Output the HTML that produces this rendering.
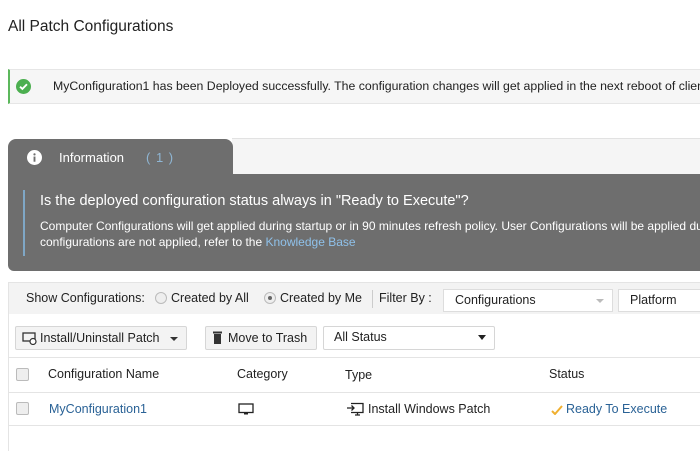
<!DOCTYPE html>
<html><head><style>
*{box-sizing:border-box;margin:0;padding:0}
html,body{width:700px;height:451px;overflow:hidden}
body{background:#fff;font-family:"Liberation Sans",sans-serif;color:#222;font-size:12.5px}
#w{position:relative;width:700px;height:451px;overflow:hidden}
.a{position:absolute;white-space:nowrap}
</style></head><body><div id="w">
<div class="a" style="left:8px;top:18px;font-size:15.5px;color:#222">All Patch Configurations</div>

<div class="a" style="left:8px;top:69px;width:692px;height:35px;background:#f6f6f6;border-top:1px solid #e6e6e6;border-bottom:1px solid #e6e6e6;border-left:2px solid #5cb85c"></div>
<svg class="a" style="left:16px;top:79px" width="15" height="15" viewBox="0 0 16 16"><circle cx="8" cy="8" r="8" fill="#4caf50"/><path d="M4.3 8.2l2.5 2.4 4.9-5" stroke="#fff" stroke-width="2" fill="none"/></svg>
<div class="a" style="left:53px;top:79px;width:647px;overflow:hidden;font-size:12.3px;color:#222">MyConfiguration1 has been Deployed successfully. The configuration changes will get applied in the next reboot of client computers</div>

<div class="a" style="left:232px;top:138px;width:468px;height:37px;background:#f5f5f5;border-top:1px solid #e2e2e2"></div>
<div class="a" style="left:8px;top:139px;width:225px;height:40px;background:#6e6e6e;border-radius:8px 8px 0 0"></div>
<div class="a" style="left:8px;top:174px;width:692px;height:97px;background:#6e6e6e;border-radius:0 0 0 6px"></div>
<svg class="a" style="left:27px;top:150px" width="15" height="15" viewBox="0 0 16 16"><circle cx="8" cy="8" r="8" fill="#fff"/><rect x="7" y="7" width="2" height="5.5" fill="#6e6e6e"/><circle cx="8" cy="4.7" r="1.2" fill="#6e6e6e"/></svg>
<div class="a" style="left:59px;top:150px;font-size:13px;color:#fff">Information</div>
<div class="a" style="left:146px;top:150px;font-size:13px;color:#8fb6d4;letter-spacing:1px">( 1 )</div>
<div class="a" style="left:23px;top:190px;width:2px;height:66px;background:#7fa7c6"></div>
<div class="a" style="left:40px;top:193px;font-size:14.5px;color:#fff">Is the deployed configuration status always in "Ready to Execute"?</div>
<div class="a" style="left:40px;top:219px;width:660px;overflow:hidden;font-size:12px;color:#fff">Computer Configurations will get applied during startup or in 90 minutes refresh policy. User Configurations will be applied during user logon. If the</div>
<div class="a" style="left:40px;top:235px;font-size:12px;color:#fff">configurations are not applied, refer to the <span style="color:#8fc1ea">Knowledge Base</span></div>

<div class="a" style="left:8px;top:282px;width:692px;height:169px;border-left:1px solid #e4e4e4;border-top:1px solid #e4e4e4"></div>
<div class="a" style="left:9px;top:283px;width:691px;height:31px;background:#f3f3f3"></div>
<div class="a" style="left:26px;top:291px;font-size:12.5px">Show Configurations:</div>
<div class="a" style="left:155px;top:292px;width:12px;height:12px;border-radius:50%;border:1px solid #bbb;background:#eee"></div>
<div class="a" style="left:171px;top:291px">Created by All</div>
<div class="a" style="left:264px;top:292px;width:12px;height:12px;border-radius:50%;border:1px solid #bbb;background:#eee"></div>
<div class="a" style="left:268px;top:296px;width:4px;height:4px;border-radius:50%;background:#666"></div>
<div class="a" style="left:280px;top:291px">Created by Me</div>
<div class="a" style="left:372px;top:290px;width:1px;height:18px;background:#ccc"></div>
<div class="a" style="left:379px;top:291px">Filter By :</div>
<div class="a" style="left:443px;top:289px;width:170px;height:23px;background:#fff;border:1px solid #ddd"></div>
<div class="a" style="left:455px;top:293px">Configurations</div>
<div class="a" style="left:596px;top:299px;border-left:4px solid transparent;border-right:4px solid transparent;border-top:4px solid #bbb"></div>
<div class="a" style="left:618px;top:289px;width:82px;height:23px;background:#fff;border:1px solid #ddd;border-right:none"></div>
<div class="a" style="left:630px;top:293px">Platform</div>

<div class="a" style="left:15px;top:326px;width:172px;height:24px;background:#f3f3f3;border:1px solid #d6d6d6;border-radius:2px"></div>
<svg class="a" style="left:22px;top:332px" width="15" height="13" viewBox="0 0 15 13"><rect x="1" y="1" width="12" height="8" fill="none" stroke="#333" stroke-width="1.3"/><circle cx="11" cy="9.5" r="3" fill="#fff" stroke="#333" stroke-width="1.2"/></svg>
<div class="a" style="left:40px;top:331px">Install/Uninstall Patch</div>
<div class="a" style="left:170px;top:337px;border-left:4px solid transparent;border-right:4px solid transparent;border-top:4px solid #333"></div>
<div class="a" style="left:205px;top:326px;width:112px;height:24px;background:#f3f3f3;border:1px solid #d6d6d6;border-radius:2px"></div>
<svg class="a" style="left:213px;top:331px" width="9" height="13" viewBox="0 0 9 13"><rect x="0" y="0.5" width="9" height="2" fill="#333"/><rect x="1" y="3" width="7" height="10" fill="#333"/></svg>
<div class="a" style="left:228px;top:331px">Move to Trash</div>
<div class="a" style="left:323px;top:326px;width:172px;height:24px;background:#fff;border:1px solid #d6d6d6;border-radius:2px"></div>
<div class="a" style="left:334px;top:330px">All Status</div>
<div class="a" style="left:478px;top:335px;border-left:4px solid transparent;border-right:4px solid transparent;border-top:5px solid #222"></div>

<div class="a" style="left:9px;top:357px;width:691px;height:1px;background:#e4e4e4"></div>
<div class="a" style="left:9px;top:392px;width:691px;height:1px;background:#e4e4e4"></div>
<div class="a" style="left:9px;top:425px;width:691px;height:1px;background:#e4e4e4"></div>
<div class="a" style="left:16px;top:368px;width:13px;height:13px;border:1px solid #bbb;border-radius:2px;background:#eee"></div>
<div class="a" style="left:48px;top:367px">Configuration Name</div>
<div class="a" style="left:237px;top:367px">Category</div>
<div class="a" style="left:345px;top:368px">Type</div>
<div class="a" style="left:549px;top:367px">Status</div>
<div class="a" style="left:16px;top:402px;width:13px;height:13px;border:1px solid #bbb;border-radius:2px;background:#eee"></div>
<div class="a" style="left:49px;top:402px;color:#2a6296">MyConfiguration1</div>
<svg class="a" style="left:238px;top:403px" width="16" height="13" viewBox="0 0 16 13"><rect x="1" y="1" width="14" height="8.5" fill="none" stroke="#222" stroke-width="1.3"/><rect x="6" y="10" width="4" height="1.5" fill="#222"/></svg>
<svg class="a" style="left:346px;top:402px" width="18" height="14" viewBox="0 0 18 14"><path d="M5 1.5h12v9H5M9 13h5M11.5 10.5V13" fill="none" stroke="#222" stroke-width="1.3"/><path d="M1 6h7M5.5 3.5L8 6 5.5 8.5" fill="none" stroke="#222" stroke-width="1.3"/></svg>
<div class="a" style="left:368px;top:402px">Install Windows Patch</div>
<svg class="a" style="left:551px;top:405px" width="12" height="10" viewBox="0 0 12 10"><path d="M1 6l3 3 7-8" fill="none" stroke="#f0b030" stroke-width="2"/></svg>
<div class="a" style="left:566px;top:402px;color:#2a6296">Ready To Execute</div>
</div></body></html>
